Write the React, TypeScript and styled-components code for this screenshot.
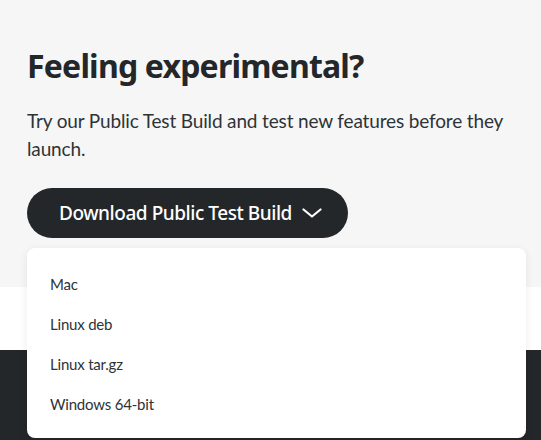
import React from "react";
import styled, { createGlobalStyle } from "styled-components";

const Global = createGlobalStyle`
  html, body { margin: 0; padding: 0; background: #ffffff; }
  body { font-family: "Noto Sans", "Liberation Sans", sans-serif; color: #23272a; }
  * { box-sizing: border-box; }
`;

const Page = styled.div`
  width: 541px;
  height: 440px;
  overflow: hidden;
  display: flex;
  flex-direction: column;
`;

const Hero = styled.section`
  background: #f6f6f6;
  height: 287px;
  padding: 45px 27px 0 27px;
  flex-shrink: 0;
`;

const Title = styled.h2`
  margin: 0;
  font-family: "Noto Sans", sans-serif;
  font-weight: 700;
  font-size: 32px;
  letter-spacing: -0.8px;
  line-height: 42px;
  color: #23272a;
`;

const Lead = styled.p`
  margin: 20px 0 0 0;
  font-family: "Lato", "Noto Sans", sans-serif;
  font-weight: 400;
  font-size: 19px;
  letter-spacing: -0.15px;
  line-height: 28px;
  color: #2e3338;
`;

const DropWrap = styled.div`
  position: relative;
  margin-top: 25px;
  width: 499px;
`;

const DownloadButton = styled.button`
  display: inline-flex;
  align-items: center;
  gap: 10px;
  height: 50px;
  padding: 0 26px 0 32px;
  border: none;
  border-radius: 25px;
  background: #23272a;
  color: #ffffff;
  font-family: "Noto Sans", sans-serif;
  font-weight: 500;
  font-size: 19px;
  letter-spacing: -0.45px;
  cursor: pointer;
`;

const Menu = styled.ul`
  position: absolute;
  left: 0;
  top: 60px;
  width: 499px;
  margin: 0;
  padding: 16px 0 14px 0;
  list-style: none;
  background: #ffffff;
  border-radius: 8px;
  box-shadow: 0 2px 10px rgba(0, 0, 0, 0.08);
  z-index: 2;
`;

const MenuItem = styled.li`
  height: 40px;
  display: flex;
  align-items: center;
  padding-left: 23px;
  font-family: "Lato", "Noto Sans", sans-serif;
  font-size: 15px;
  letter-spacing: -0.2px;
  color: #2e3338;
`;

const WhiteBand = styled.div`
  height: 63px;
  background: #ffffff;
  flex-shrink: 0;
`;

const Footer = styled.footer`
  flex: 1;
  background: #23272a;
`;

const Chevron = () => (
  <svg width="20" height="10" viewBox="0 0 20 10" fill="none">
    <path d="M1.5 1.5 L10 8.5 L18.5 1.5" stroke="#ffffff" strokeWidth="2.2" strokeLinecap="round" strokeLinejoin="round" />
  </svg>
);

export default function App() {
  const items = ["Mac", "Linux deb", "Linux tar.gz", "Windows 64-bit"];
  return (
    <>
      <Global />
      <Page>
        <Hero>
          <Title>Feeling experimental?</Title>
          <Lead>Try our Public Test Build and test new features before they launch.</Lead>
          <DropWrap>
            <DownloadButton>
              Download Public Test Build
              <Chevron />
            </DownloadButton>
            <Menu>
              {items.map((i) => (
                <MenuItem key={i}>{i}</MenuItem>
              ))}
            </Menu>
          </DropWrap>
        </Hero>
        <WhiteBand />
        <Footer />
      </Page>
    </>
  );
}
